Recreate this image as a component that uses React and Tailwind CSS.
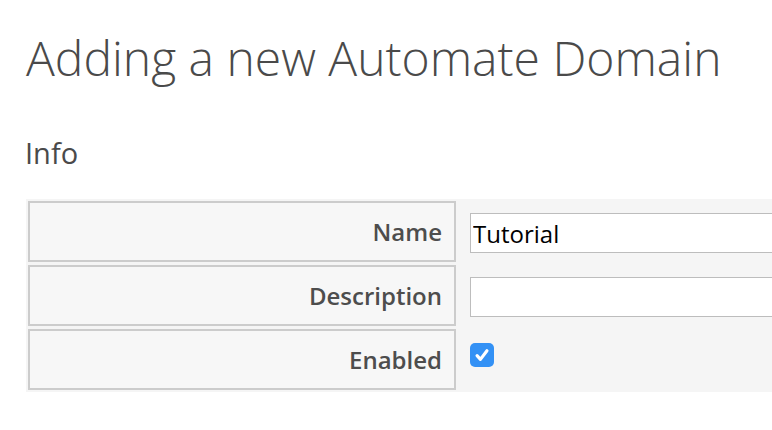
export default function App() {
  const rows = [
    { label: "Name", type: "text", value: "Tutorial" },
    { label: "Description", type: "text", value: "" },
    { label: "Enabled", type: "check" },
  ];

  return (
    <div
      className="w-[772px] h-[430px] overflow-hidden bg-white text-[#4a4a4a]"
      style={{ fontFamily: '"Open Sans", "Liberation Sans", sans-serif' }}
    >
      <h1 className="pl-[26px] pt-[34px] text-[48px] font-light leading-none whitespace-nowrap">
        Adding a new Automate Domain
      </h1>

      <h3 className="pl-[25px] mt-[56px] text-[29px] font-normal leading-none">Info</h3>

      <div className="ml-[26px] mt-[32px] w-[800px] grid grid-cols-[428px_1fr] gap-[3px] p-[2px] bg-[#f5f5f5]">
        {rows.map((row) => (
          <div key={row.label} className="contents">
            <div className="h-[61px] border-2 border-[#cccccc] bg-[#f7f7f7] pr-[12px] flex items-center justify-end text-[24px] font-semibold leading-none text-[#4d4d4d]">
              {row.label}
            </div>
            <div className="pl-[11px] flex items-center">
              {row.type === "check" ? (
                <div className="w-[24px] h-[24px] -mt-[10px] rounded-[5px] bg-[#3391f5] flex items-center justify-center">
                  <svg width="18" height="18" viewBox="0 0 16 16" fill="none">
                    <path
                      d="M3.6 8.6 L6.6 11.9 L12.4 4.2"
                      stroke="white"
                      strokeWidth="2.8"
                      strokeLinecap="round"
                      strokeLinejoin="round"
                    />
                  </svg>
                </div>
              ) : (
                <input
                  type="text"
                  defaultValue={row.value}
                  className="block w-[400px] h-[40px] mt-[3px] border border-[#bdbdbd] bg-white px-[2px] text-[24px] text-black outline-none"
                  style={{ fontFamily: '"Open Sans", "Liberation Sans", sans-serif' }}
                />
              )}
            </div>
          </div>
        ))}
      </div>
    </div>
  );
}
